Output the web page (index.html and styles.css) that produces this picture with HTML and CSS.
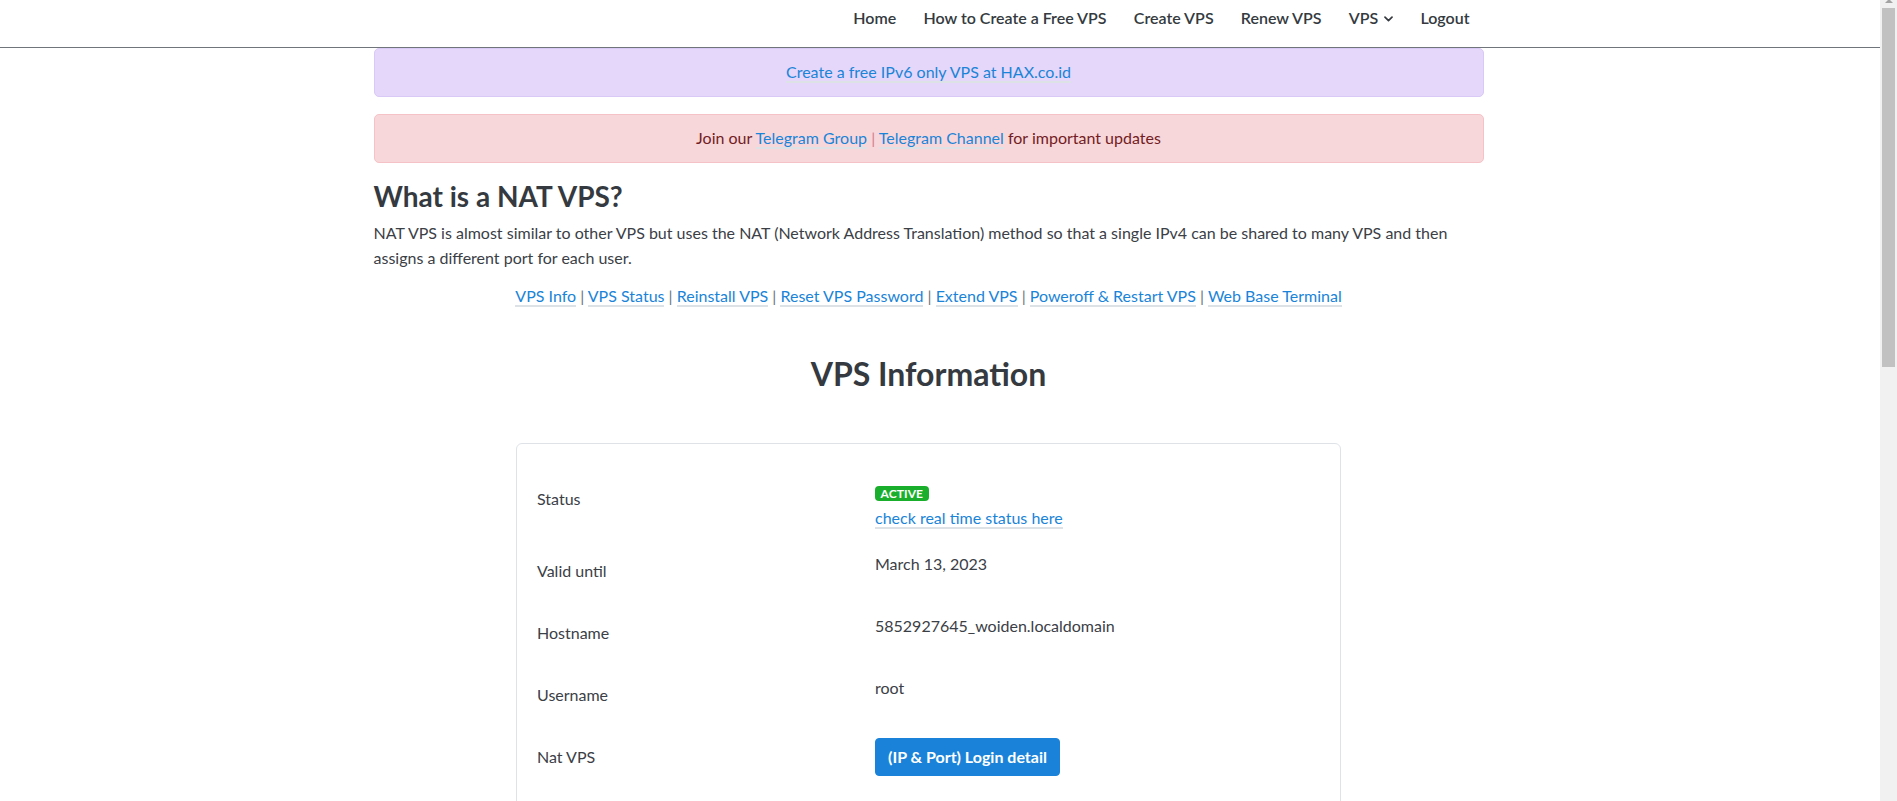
FILE: index.html
```html
<!DOCTYPE html>
<html lang="en">
<head>
<meta charset="utf-8">
<title>VPS Information</title>
<link rel="stylesheet" href="styles.css">
</head>
<body>
<header class="topbar">
  <div class="container">
    <nav class="nav">
      <a class="nav-link" href="#">Home</a>
      <a class="nav-link" href="#">How to Create a Free VPS</a>
      <a class="nav-link" href="#">Create VPS</a>
      <a class="nav-link" href="#">Renew VPS</a>
      <a class="nav-link nav-dropdown" href="#">VPS
        <svg class="caret" width="9" height="6" viewBox="0 0 9 6" aria-hidden="true"><path d="M1 1.2 L4.5 4.6 L8 1.2" fill="none" stroke="#343a40" stroke-width="1.7" stroke-linecap="round" stroke-linejoin="round"/></svg>
      </a>
      <a class="nav-link" href="#">Logout</a>
    </nav>
  </div>
</header>

<main class="container main">
  <div class="alert alert-purple">
    <a class="link" href="#">Create a free IPv6 only VPS at HAX.co.id</a>
  </div>
  <div class="alert alert-pink">
    Join our <a class="link" href="#">Telegram Group</a> <span class="alert-sep">|</span> <a class="link" href="#">Telegram Channel</a> for important updates
  </div>

  <h3 class="title">What is a NAT VPS?</h3>
  <p class="intro">NAT VPS is almost similar to other VPS but uses the NAT (Network Address Translation) method so that a single IPv4 can be shared to many VPS and then assigns a different port for each user.</p>

  <div class="quick-links">
    <a class="link" href="#">VPS Info</a> <span class="sep">|</span>
    <a class="link" href="#">VPS Status</a> <span class="sep">|</span>
    <a class="link" href="#">Reinstall VPS</a> <span class="sep">|</span>
    <a class="link" href="#">Reset VPS Password</a> <span class="sep">|</span>
    <a class="link" href="#">Extend VPS</a> <span class="sep">|</span>
    <a class="link" href="#">Poweroff &amp; Restart VPS</a> <span class="sep">|</span>
    <a class="link" href="#">Web Base Terminal</a>
  </div>

  <h2 class="section-title">VPS Information</h2>

  <div class="card">
    <div class="info-row">
      <div class="info-label">Status</div>
      <div class="info-value status-value">
        <span class="badge">ACTIVE</span>
        <span class="status-line"><a class="link" href="#">check real time status here</a></span>
      </div>
    </div>
    <div class="info-row">
      <div class="info-label">Valid until</div>
      <div class="info-value"><p class="value-text">March 13, 2023</p></div>
    </div>
    <div class="info-row">
      <div class="info-label">Hostname</div>
      <div class="info-value"><p class="value-text">5852927645_woiden.localdomain</p></div>
    </div>
    <div class="info-row">
      <div class="info-label">Username</div>
      <div class="info-value"><p class="value-text">root</p></div>
    </div>
    <div class="info-row">
      <div class="info-label">Nat VPS</div>
      <div class="info-value"><p class="value-text"><a class="btn" href="#">(IP &amp; Port) Login detail</a></p></div>
    </div>
    <div class="info-row">
      <div class="info-label">Location</div>
      <div class="info-value"><p class="value-text">Germany</p></div>
    </div>
    <div class="info-row">
      <div class="info-label">Operating System</div>
      <div class="info-value"><p class="value-text">Debian 11</p></div>
    </div>
  </div>
</main>

<div class="scrollbar" aria-hidden="true">
  <div class="scroll-arrow"></div>
  <div class="scroll-thumb"></div>
</div>
</body>
</html>
```

FILE: styles.css
```css
* { box-sizing: border-box; }

html, body {
  margin: 0;
  padding: 0;
  background: #fff;
}

body {
  font-family: "Lato", "Noto Sans", sans-serif;
  font-size: 16px;
  line-height: 1.5;
  color: #343a40;
  padding-right: 40px;
}

.container {
  width: 1110px;
  margin-left: auto;
  margin-right: auto;
}

/* top navigation */
.topbar {
  height: 48px;
  border-bottom: 1px solid #6f757b;
  margin-right: -40px;
  padding-right: 40px;
}

.nav {
  display: flex;
  justify-content: flex-end;
  align-items: center;
  padding-top: 6px;
}

.nav-link {
  display: inline-flex;
  align-items: center;
  gap: 6px;
  padding: 0 13.6px;
  line-height: 24px;
  font-weight: 600;
  color: #343a40;
  text-decoration: none;
  font-size: 16px;
}

.nav-link:first-child { padding-left: 11px; }
.nav-link:last-child { padding-right: 14px; }

.caret { display: block; margin-top: 1px; }

/* links */
.link {
  color: #1a84d8;
  text-decoration: none;
  border-bottom: 2px solid #dde2e7;
}

/* alerts */
.alert {
  border: 1px solid transparent;
  border-radius: 5px;
  padding: 12px 20px 13px;
  line-height: 22px;
  text-align: center;
  margin-bottom: 17px;
}

.alert-purple {
  background: #e4d7fa;
  border-color: #d9c9f6;
}

.alert-pink {
  background: #f8d7da;
  border-color: #f5c2c7;
  color: #721c24;
}

.alert-sep { color: #d47f8a; }

/* intro */
.title {
  font-size: 28px;
  font-weight: 700;
  line-height: 1.2;
  margin: 0 0 6px;
  color: #343a40;
}

.intro {
  margin: 0 0 13px;
  line-height: 1.6;
  color: #3b4046;
}

.quick-links {
  text-align: center;
  line-height: 24px;
}

.sep { color: #6c757d; }

.section-title {
  text-align: center;
  font-size: 32px;
  font-weight: 700;
  line-height: 1.2;
  margin: 47px 0 50px;
  color: #343a40;
}

/* card */
.card {
  width: 825px;
  margin: 0 auto 600px;
  border: 1px solid #dfe3e7;
  border-radius: 6px;
  padding: 25px 20px 20px;
}

.info-row {
  display: grid;
  grid-template-columns: 338px 1fr;
  padding: 11px 0;
}

.info-label {
  padding-top: 7px;
  line-height: 24px;
  color: #3b4046;
}

.info-value { line-height: 24px; color: #3b4046; }

.value-text { margin: 0 0 16px; }

.status-value {
  display: flex;
  flex-direction: column;
  align-items: flex-start;
}

.badge {
  display: inline-block;
  margin-top: 6px;
  margin-bottom: 4.5px;
  background: #19af2c;
  color: #fff;
  font-size: 12px;
  font-weight: 700;
  line-height: 1;
  padding: 1.5px 5.5px;
  border-radius: 4px;
  letter-spacing: 0.1px;
}

.status-line { display: block; line-height: 24px; }

.btn {
  display: inline-block;
  background: #1a83d9;
  color: #fff;
  font-weight: 700;
  text-decoration: none;
  border: 1px solid #1a83d9;
  border-radius: 4px;
  padding: 6px 12px;
  line-height: 24px;
  vertical-align: top;
}

/* window scrollbar drawn over the page edge */
.scrollbar {
  position: fixed;
  top: 0;
  right: 0;
  width: 17px;
  height: 100vh;
  background: #f1f1f1;
}

.scroll-arrow {
  width: 0;
  height: 0;
  margin: 0 auto;
  border-left: 4px solid transparent;
  border-right: 4px solid transparent;
  border-bottom: 4px solid #a3a3a3;
  margin-top: -1px;
}

.scroll-thumb {
  width: 13px;
  height: 359px;
  margin: 5px auto 0;
  background: #c1c1c1;
}
```
